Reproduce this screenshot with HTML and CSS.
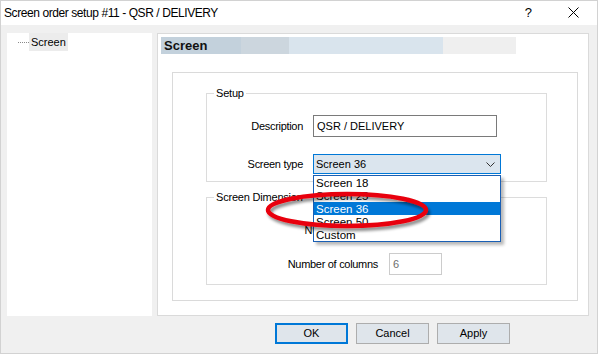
FILE: index.html
```html
<!DOCTYPE html>
<html>
<head>
<meta charset="utf-8">
<link rel="stylesheet" href="styles.css">
</head>
<body>
<div class="window">
  <div class="titlebar">
    <span class="title">Screen order setup #11 - QSR / DELIVERY</span>
    <span class="tb-help">?</span>
    <svg class="tb-close" width="11" height="11" viewBox="0 0 11 11"><path d="M0.5 0.5 L10.5 10.5 M10.5 0.5 L0.5 10.5" stroke="#000" stroke-width="1" fill="none"/></svg>
  </div>
  <div class="main">
    <div class="tree">
      <div class="tree-item"><span class="tree-dots"></span><span class="tree-label">Screen</span></div>
    </div>
    <div class="page">
      <div class="page-header">Screen</div>
      <div class="page-box">
        <fieldset class="group setup">
          <legend>Setup</legend>
          <div class="row row-desc">
            <span class="lbl">Description</span>
            <div class="textbox desc">QSR / DELIVERY</div>
          </div>
          <div class="row row-type">
            <span class="lbl">Screen type</span>
            <div class="combo">
              <span class="combo-text">Screen 36</span>
              <svg class="chev" width="9" height="5" viewBox="0 0 9 5"><path d="M0.5 0.5 L4.5 4.5 L8.5 0.5" stroke="#333" stroke-width="1" fill="none"/></svg>
              <div class="dropdown">
                <div class="opt">Screen 18</div>
                <div class="opt">Screen 25</div>
                <div class="opt sel">Screen 36</div>
                <div class="opt">Screen 50</div>
                <div class="opt">Custom</div>
              </div>
            </div>
          </div>
        </fieldset>
        <fieldset class="group dims">
          <legend>Screen Dimension</legend>
          <div class="row row-dim">
            <span class="lbl wide">Number of rows</span>
            <div class="textbox num">5</div>
          </div>
          <div class="row row-dim">
            <span class="lbl wide">Number of columns</span>
            <div class="textbox num">6</div>
          </div>
        </fieldset>
      </div>
    </div>
  </div>
  <div class="footer">
    <div class="btn default">OK</div>
    <div class="btn">Cancel</div>
    <div class="btn">Apply</div>
  </div>
  <svg class="annot" width="180" height="50" viewBox="0 0 180 50">
    <defs>
      <filter id="sh" x="-10%" y="-40%" width="120%" height="180%">
        <feGaussianBlur in="SourceAlpha" stdDeviation="1.6"/>
        <feOffset dx="2" dy="3" result="b"/>
        <feComponentTransfer><feFuncA type="linear" slope="0.45"/></feComponentTransfer>
        <feMerge><feMergeNode/><feMergeNode in="SourceGraphic"/></feMerge>
      </filter>
    </defs>
    <ellipse cx="87" cy="23" rx="79" ry="16" fill="none" stroke="#e8000c" stroke-width="4.5" filter="url(#sh)"/>
  </svg>
</div>
</body>
</html>
```
FILE: styles.css
```css
* { box-sizing: border-box; }
html, body { margin: 0; padding: 0; }
body {
  width: 598px;
  height: 354px;
  font-family: "Liberation Sans", Arial, sans-serif;
  font-size: 11px;
  color: #000;
  background: #f0f0f0;
}
.window {
  position: relative;
  width: 598px;
  height: 354px;
  border: 1px solid #d2d2d2;
  background: #f0f0f0;
  display: flex;
  flex-direction: column;
}
.titlebar {
  height: 24px;
  background: #fff;
  display: flex;
  align-items: center;
  padding-left: 3px;
  flex: none;
}
.title {
  font-size: 12px;
  letter-spacing: -0.42px;
  flex: 1;
}
.tb-help {
  font-size: 13px;
  margin-right: 36px;
  margin-top: -1px;
}
.tb-close {
  margin-right: 18px;
  margin-top: -1px;
}
.main {
  display: flex;
  gap: 5px;
  padding: 8px 8px 0 6px;
  height: 291px;
  flex: none;
}
.tree {
  width: 145px;
  height: 283px;
  background: #fff;
  padding-left: 11px;
}
.tree-item {
  display: flex;
  align-items: center;
  height: 18px;
}
.tree-dots {
  width: 11px;
  height: 1px;
  border-bottom: 1px dotted #8a8a8a;
  margin-top: 1px;
}
.tree-label {
  background: #ececec;
  height: 18px;
  line-height: 18px;
  padding: 0 2px 0 2px;
}
.page {
  width: 432px;
  height: 283px;
  background: #fff;
  border: 1px solid #dadada;
  padding: 3px;
  display: flex;
  flex-direction: column;
}
.page-header {
  width: 355px;
  height: 17px;
  line-height: 17px;
  font-weight: bold;
  font-size: 13px;
  padding-left: 3px;
  color: #111;
  background: linear-gradient(to right, #c3d1dc 0, #c3d1dc 80px, #ccd6de 80px, #ccd6de 128px, #d9e4ed 128px, #d9e4ed 282px, #efefef 282px, #efefef 355px);
  flex: none;
}
.page-box {
  margin: 18px 7px 11px 11px;
  flex: 1;
  border: 1px solid #dadada;
  padding: 14px 30px 0 33px;
}
.group {
  margin: 0;
  border: 1px solid #dcdcdc;
  padding: 0;
  min-width: 0;
}
.group legend {
  margin-left: 7px;
  padding: 0 2px;
  line-height: 13px;
  letter-spacing: -0.2px;
}
.row {
  display: flex;
  align-items: center;
}
.lbl {
  width: 96px;
  text-align: right;
  margin-right: 10px;
  letter-spacing: -0.3px;
}
.lbl.wide {
  width: 171px;
  margin-right: 11px;
}
.setup {
  padding: 15px 0 7px 0;
}
.row-type {
  margin-top: 17px;
}
.textbox {
  height: 22px;
  border: 1px solid #7a7a7a;
  background: #fff;
  padding: 0 3px;
  line-height: 20px;
}
.textbox.desc {
  width: 184px;
}
.combo {
  position: relative;
  width: 188px;
  height: 20px;
  border: 1px solid #0078d7;
  background: #dbe5ee;
  display: flex;
  align-items: center;
  padding-left: 2px;
}
.combo-text { flex: 1; }
.chev { margin-right: 5px; }
.dropdown {
  position: absolute;
  left: -1px;
  top: calc(100% + 2px);
  width: 188px;
  border: 1px solid #1a5fb4;
  background: #fff;
  box-shadow: 3px 3px 3px rgba(0, 0, 0, 0.28);
  z-index: 2;
  font-size: 11.5px;
}
.opt {
  height: 13px;
  line-height: 14px;
  padding-left: 2px;
}
.opt.sel {
  background: #0078d7;
  color: #fff;
}
.dims {
  margin-top: 9px;
  padding: 15px 0 9px 0;
}
.row-dim + .row-dim {
  margin-top: 12px;
}
.textbox.num {
  width: 53px;
  border-color: #cccccc;
  color: #6d6d6d;
}
.footer {
  display: flex;
  justify-content: flex-end;
  gap: 8px;
  padding: 7px 87px 0 0;
}
.btn {
  width: 73px;
  height: 21px;
  border: 1px solid #adadad;
  background: #dfe5eb;
  text-align: center;
  line-height: 19px;
  font-size: 11px;
}
.btn.default {
  border: 2px solid #0078d7;
  line-height: 17px;
}
.annot {
  position: absolute;
  left: 259px;
  top: 186px;
  z-index: 5;
}
```
